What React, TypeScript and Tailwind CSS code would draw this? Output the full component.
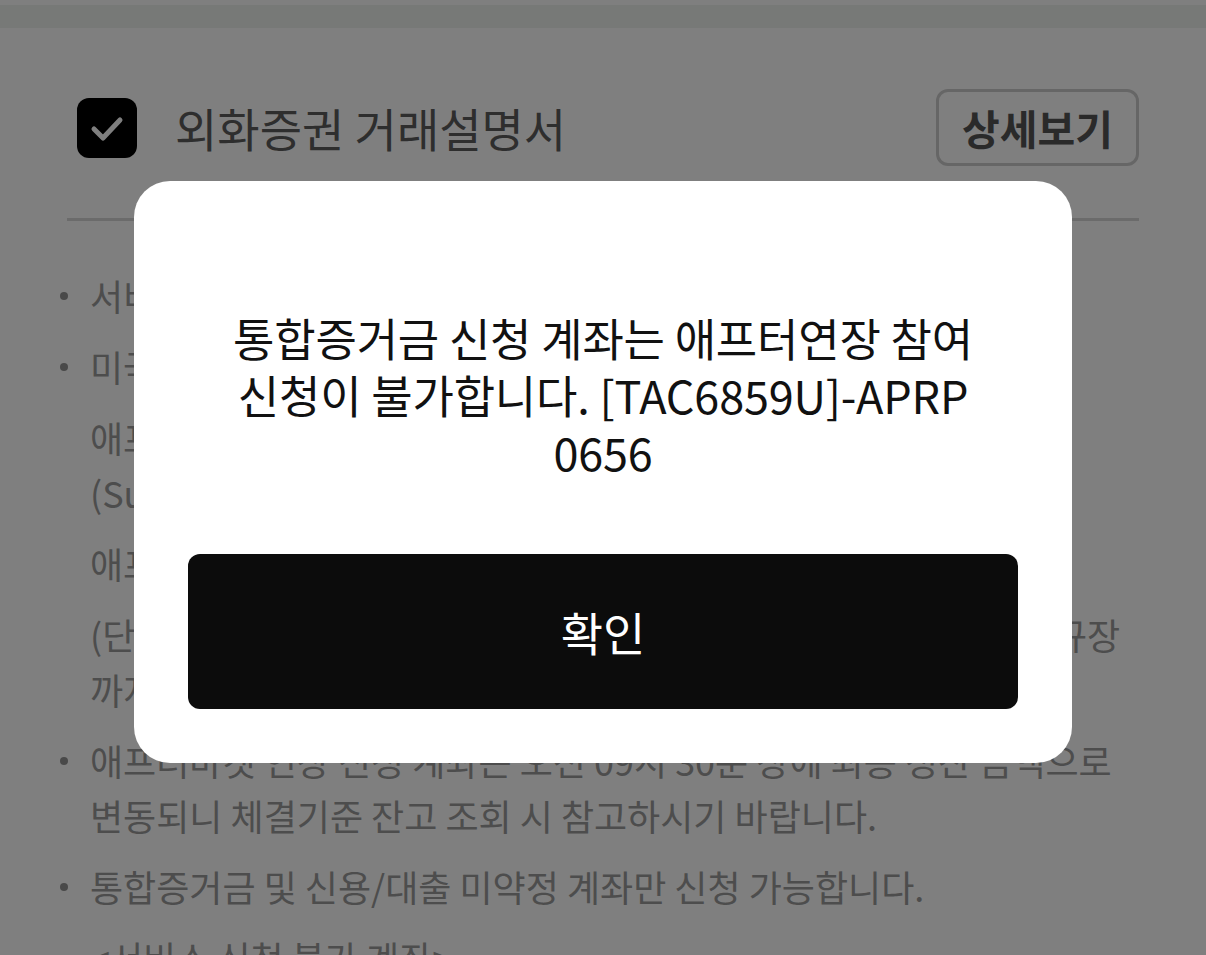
const notices = [
  { bullet: true, lines: ["서비스 신청은 영업일 기준 08:00 ~ 18:00 까지 가능합니다."] },
  { bullet: true, lines: ["미국주식 애프터마켓 연장 거래 서비스 안내"] },
  {
    bullet: false,
    lines: ["애프터마켓 연장 거래시간 : 16:00 ~ 20:00", "(Summer Time 적용 시 한국시간 기준 1시간 앞당겨집니다.)"],
  },
  { bullet: false, lines: ["애프터마켓 연장 주문은 지정가 주문만 가능합니다."] },
  {
    bullet: false,
    lines: ["(단, 미국 현지의 휴장일 및 조기 폐장일에는 연장 거래 불가하며 정규장", "까지만 거래 가능합니다.)"],
  },
  {
    bullet: true,
    lines: [
      "애프터마켓 연장 신청 계좌는 오전 09시 30분 장에 최종 정산 금액으로",
      "변동되니 체결기준 잔고 조회 시 참고하시기 바랍니다.",
    ],
  },
  { bullet: true, lines: ["통합증거금 및 신용/대출 미약정 계좌만 신청 가능합니다."] },
  { bullet: false, lines: ["<서비스 신청 불가 계좌>"] },
];

function CheckBox() {
  return (
    <div className="ml-[10px] flex h-[60px] w-[60px] shrink-0 items-center justify-center rounded-[12px] bg-black">
      <svg width="60" height="60" viewBox="0 0 60 60" fill="none">
        <polyline
          points="17,31 26,40 43,22"
          stroke="#ffffff"
          strokeWidth="5"
          strokeLinecap="round"
          strokeLinejoin="round"
        />
      </svg>
    </div>
  );
}

function AlertDialog() {
  return (
    <div className="fixed inset-0 flex justify-center bg-black/50 pt-[181px]">
      <div className="flex h-fit w-[938px] flex-col rounded-[36px] bg-white px-[54px] pb-[54px] pt-[128px]">
        <p className="text-center text-[45px] leading-[57px] tracking-[-0.2px] text-[#111111]">
          통합증거금 신청 계좌는 애프터연장 참여
          <br />
          신청이 불가합니다. [TAC6859U]-APRP
          <br />
          0656
        </p>
        <button className="mt-[74px] h-[155px] w-full rounded-[12px] bg-[#0c0c0c] text-[46px] text-white">
          확인
        </button>
      </div>
    </div>
  );
}

export default function App() {
  return (
    <div
      className="relative min-h-screen overflow-hidden bg-white"
      style={{ fontFamily: '"Noto Sans CJK KR", "Noto Sans", sans-serif' }}
    >
      <div className="h-[28px] border-t-[5px] border-white bg-[#eef2ef]" />

      <div className="px-[67px]">
        <div className="mt-[61px] flex h-[77px] items-center justify-between">
          <div className="flex items-center">
            <CheckBox />
            <span className="ml-[38px] text-[46px] text-[#5c5c5c]">외화증권 거래설명서</span>
          </div>
          <button className="h-[77px] w-[203px] rounded-[12px] border-[3px] border-[#cdcdcd] text-[41px] font-bold text-[#555555]">
            상세보기
          </button>
        </div>

        <div className="mt-[52px] h-[3px] bg-[#d6d6d6]" />

        <ul className="mt-[47px] flex flex-col gap-[16px]">
          {notices.map((item, i) => (
            <li key={i} className="relative pl-[23px] text-[36px] leading-[55px] text-[#9a9a9a]">
              {item.bullet && (
                <span className="absolute left-[-7px] top-[24px] h-[8px] w-[8px] rounded-full bg-[#939393]" />
              )}
              {item.lines.map((line, j) => (
                <span key={j} className="block whitespace-nowrap">
                  {line}
                </span>
              ))}
            </li>
          ))}
        </ul>
      </div>

      <AlertDialog />
    </div>
  );
}
